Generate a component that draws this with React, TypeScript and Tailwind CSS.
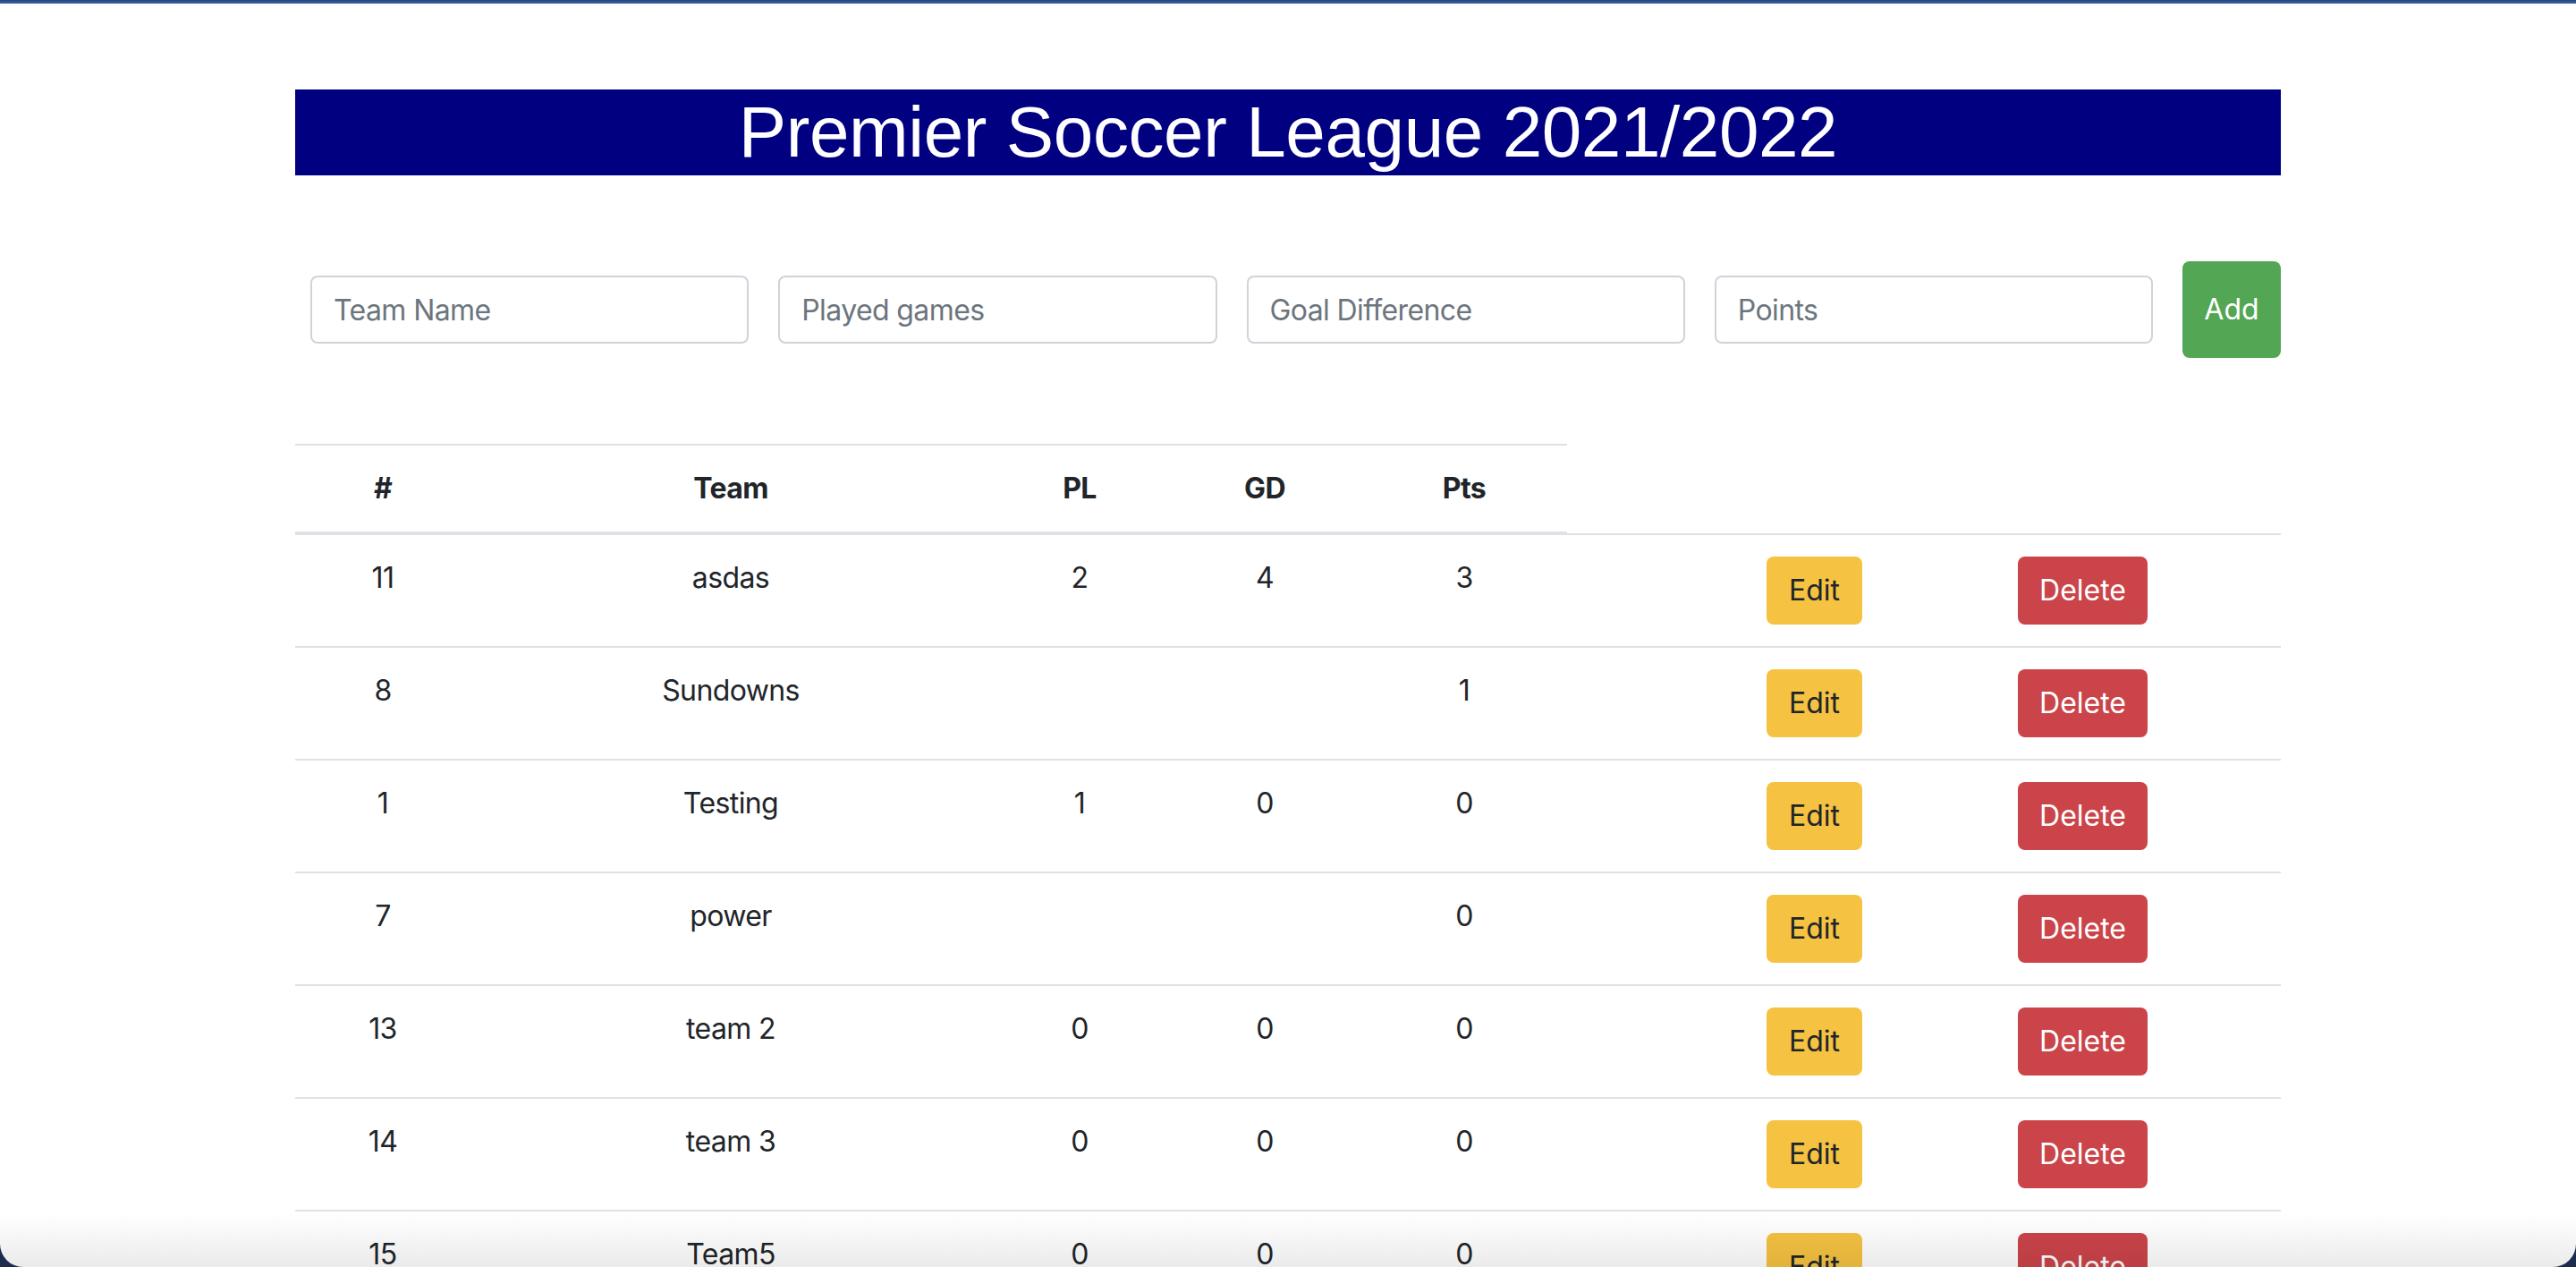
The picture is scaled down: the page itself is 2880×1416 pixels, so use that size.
const teams = [
  { id: '11', name: 'asdas', pl: '2', gd: '4', pts: '3' },
  { id: '8', name: 'Sundowns', pl: '', gd: '', pts: '1' },
  { id: '1', name: 'Testing', pl: '1', gd: '0', pts: '0' },
  { id: '7', name: 'power', pl: '', gd: '', pts: '0' },
  { id: '13', name: 'team 2', pl: '0', gd: '0', pts: '0' },
  { id: '14', name: 'team 3', pl: '0', gd: '0', pts: '0' },
  { id: '15', name: 'Team5', pl: '0', gd: '0', pts: '0' },
]

const placeholders = ['Team Name', 'Played games', 'Goal Difference', 'Points']

function Cell({ width, children, bold }: { width: string; children: React.ReactNode; bold?: boolean }) {
  return (
    <div
      className={
        width +
        ' shrink-0 text-center py-[24px] leading-[48px] text-[32px] tracking-[-0.6px] text-[#212529]' +
        (bold ? ' font-bold' : '')
      }
    >
      {children}
    </div>
  )
}

export default function App() {
  return (
    <div className="w-[2880px] h-[1416px] bg-[#1b2d4f] font-['Inter','Noto_Sans',sans-serif]">
      <div className="relative w-full h-full bg-white rounded-b-[26px] overflow-hidden">
        <div className="h-[4px] bg-linear-to-b from-[#24467f] to-[#3a63a3]" />

        <div className="w-[2220px] mx-auto flex flex-col">
          <h1 className="mt-[96px] bg-[#000080] text-white text-center text-[80px] leading-[96px] tracking-[-0.4px] font-['Liberation_Sans',Arial,sans-serif]">
            Premier Soccer League 2021/2022
          </h1>

          <div className="mt-[96px] flex items-center gap-[33px] pl-[17px]">
            {placeholders.map((p) => (
              <input
                key={p}
                placeholder={p}
                className="flex-1 min-w-0 h-[76px] px-[24px] border-2 border-[#ced4da] rounded-[8px] text-[32px] tracking-[-0.6px] text-[#495057] placeholder:text-[#6c757d] outline-none"
              />
            ))}
            <button className="w-[110px] h-[108px] shrink-0 rounded-[8px] bg-[#53a653] text-white text-[32px]">
              Add
            </button>
          </div>

          <div className="mt-[96px] flex flex-col">
            <div className="flex">
              <div className="flex border-t-2 border-b-4 border-[#dee2e6]">
                <Cell width="w-[196px]" bold>#</Cell>
                <Cell width="w-[582px]" bold>Team</Cell>
                <Cell width="w-[198px]" bold>PL</Cell>
                <Cell width="w-[216px]" bold>GD</Cell>
                <Cell width="w-[230px]" bold>Pts</Cell>
              </div>
              <div className="flex-1 border-b-2 border-[#dee2e6]" />
            </div>

            {teams.map((t) => (
              <div key={t.id} className="flex items-start border-b-2 border-[#dee2e6]">
                <Cell width="w-[196px]">{t.id}</Cell>
                <Cell width="w-[582px]">{t.name}</Cell>
                <Cell width="w-[198px]">{t.pl}</Cell>
                <Cell width="w-[216px]">{t.gd}</Cell>
                <Cell width="w-[230px]">{t.pts}</Cell>
                <div className="flex-1 flex py-[24px] pl-[223px] gap-[174px]">
                  <button className="h-[76px] px-[25px] rounded-[8px] bg-[#f5c242] text-[#212529] text-[32px] leading-[48px]">
                    Edit
                  </button>
                  <button className="h-[76px] px-[24px] rounded-[8px] bg-[#cb444a] text-white text-[32px] leading-[48px]">
                    Delete
                  </button>
                </div>
              </div>
            ))}
          </div>
        </div>

        <div className="pointer-events-none absolute inset-x-0 bottom-0 h-[60px] bg-linear-to-b from-transparent to-black/[0.08]" />
      </div>
    </div>
  )
}
